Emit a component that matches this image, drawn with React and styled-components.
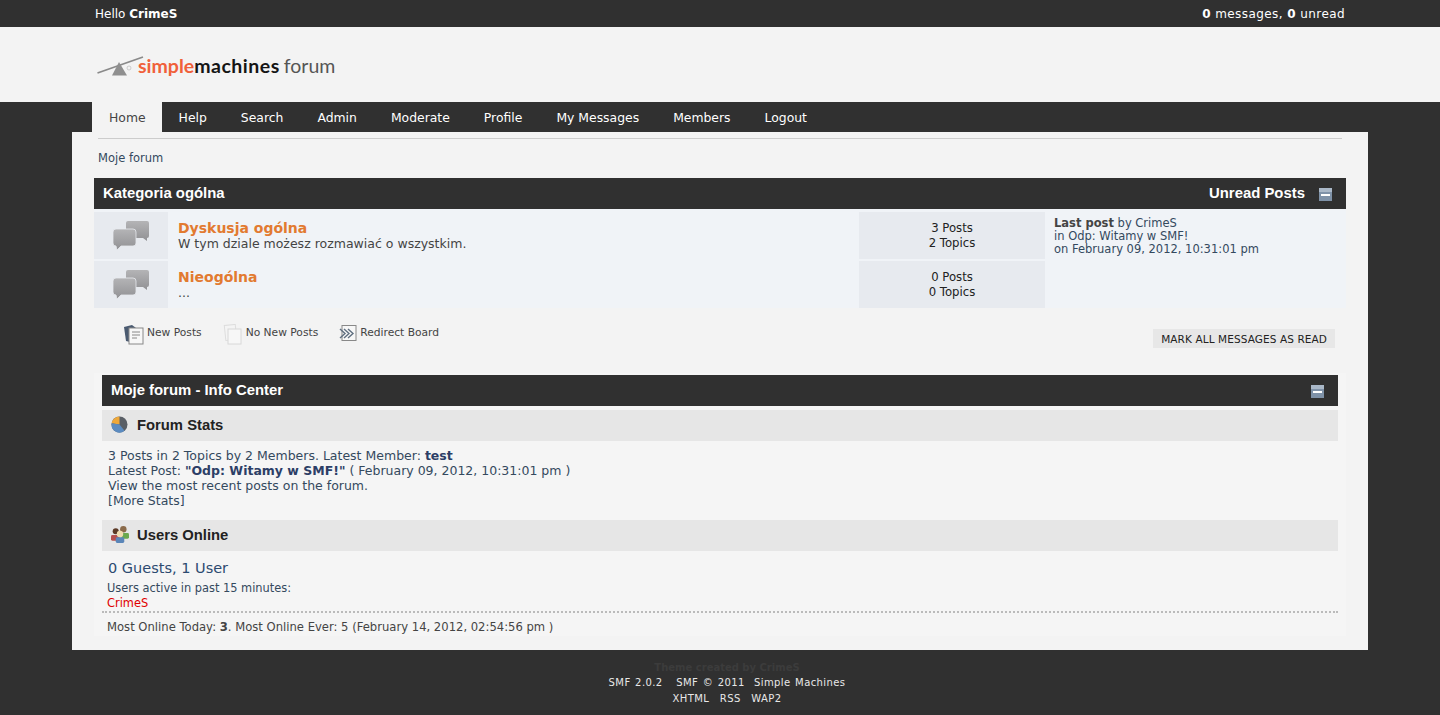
import React from "react";
import styled, { createGlobalStyle } from "styled-components";

const GlobalStyle = createGlobalStyle`
  html, body {
    margin: 0;
    padding: 0;
    background: #303030;
  }
  body {
    font-family: "DejaVu Sans", Verdana, sans-serif;
    font-size: 11.5px;
    color: #444;
  }
`;

const Page = styled.div`
  width: 1440px;
  height: 715px;
  overflow: hidden;
  background: #303030;
`;

const TopBar = styled.div`
  height: 27px;
  padding: 0 95px;
  display: flex;
  justify-content: space-between;
  align-items: center;
  color: #fff;
  font-size: 12px;
  b { font-weight: bold; }
`;

const TopRight = styled.span`
  letter-spacing: 0.42px;
`;

const Header = styled.div`
  height: 75px;
  background: #f3f3f3;
  padding-left: 97px;
  display: flex;
  align-items: center;
`;

const Logo = styled.div`
  display: flex;
  align-items: center;
  font-family: Lato, sans-serif;
  font-size: 19.5px;
  font-weight: 700;
  margin-top: 2px;
`;

const LogoText = styled.span`
  margin-left: -6px;
`;

const LogoWord = styled.span`
  color: ${(p) => p.$color};
  margin-right: ${(p) => p.$gap || 0}px;
  font-weight: ${(p) => p.$weight || 700};
  letter-spacing: ${(p) => p.$track || 0}px;
`;

const Nav = styled.nav`
  height: 30px;
  padding-left: 92px;
  display: flex;
`;

const NavItem = styled.a`
  padding: 0 ${(p) => (p.$active ? 16 : 17)}px 0 17px;
  height: 30px;
  line-height: 31px;
  font-size: 12.4px;
  color: ${(p) => (p.$active ? "#444" : "#fff")};
  background: ${(p) => (p.$active ? "#f3f3f3" : "transparent")};
`;

const Content = styled.main`
  width: 1296px;
  height: 518px;
  margin-left: 72px;
  background: #f3f3f3;
  padding: 6px 22px 0;
  box-sizing: border-box;
`;

const Crumb = styled.div`
  margin: 0 4px;
  border-top: 1px solid #ccc;
  height: 39px;
  line-height: 39px;
  font-size: 11.5px;
  color: #34495e;
`;

const CatBar = styled.div`
  height: 31px;
  box-sizing: border-box;
  padding: 0 ${(p) => p.$right}px 2px 9px;
  background: #303030;
  color: #fff;
  font-family: "Liberation Sans", Arial, sans-serif;
  font-weight: bold;
  font-size: 14.9px;
  display: flex;
  align-items: center;
  justify-content: space-between;
`;

const BarRight = styled.div`
  display: flex;
  align-items: center;
  gap: 14px;
`;

const CollapseIcon = styled.svg`
  margin-top: 4px;
  flex: none;
`;

const Boards = styled.div`
  display: grid;
  grid-template-columns: 74px 691px 186px 1fr;
  grid-auto-rows: 47px;
  row-gap: 2px;
  background: #f0f3f7;
  padding: 3px 0 0;
  height: 96px;
`;

const IconCell = styled.div`
  background: #e7eaef;
  display: flex;
  align-items: center;
  justify-content: center;
`;

const InfoCell = styled.div`
  padding: 9px 10px 0;
  line-height: 15px;
  font-size: 12.5px;
  color: #444;
`;

const BoardName = styled.div`
  font-size: 14px;
  font-weight: bold;
  color: #e27a30;
  line-height: 15px;
`;

const StatsCell = styled.div`
  background: #e7eaef;
  padding-top: 1px;
  box-sizing: border-box;
  display: flex;
  flex-direction: column;
  align-items: center;
  justify-content: center;
  line-height: 15px;
  font-size: 11.7px;
  color: #222;
`;

const LastCell = styled.div`
  padding: 5px 9px 0;
  line-height: 13px;
  font-size: 11.5px;
  color: #34495e;
  b { color: #444; }
`;

const LegendRow = styled.div`
  display: flex;
  justify-content: space-between;
  padding: 16px 11px 0 30px;
  height: 67px;
  box-sizing: border-box;
`;

const Legend = styled.div`
  display: flex;
  gap: 21px;
  height: 24px;
`;

const LegendItem = styled.div`
  display: flex;
  gap: 3px;
  align-items: flex-start;
  font-size: 10.7px;
  line-height: 17px;
  color: #444;
`;

const MarkButton = styled.a`
  height: 19px;
  margin-top: 5px;
  padding: 0 8px;
  background: #e7e7e7;
  color: #222;
  font-size: 10.5px;
  line-height: 20px;
  letter-spacing: 0.1px;
`;

const InfoCenter = styled.section`
  margin-top: -2px;
  padding: 2px 8px 0;
  height: 263px;
  box-sizing: border-box;
  background: #f5f5f5;
`;

const SubHeader = styled.div`
  height: 31px;
  box-sizing: border-box;
  padding: 0 0 2px 9px;
  margin-top: 4px;
  background: #e6e6e6;
  display: flex;
  align-items: center;
  gap: 8px;
  font-family: "Liberation Sans", Arial, sans-serif;
  font-size: 14.8px;
  font-weight: bold;
  color: #222;
`;

const SubIcon = styled.span`
  width: 18px;
  display: flex;
`;

const StatsText = styled.div`
  padding: 7px 6px 0;
  height: 68px;
  font-size: 12.5px;
  line-height: 15px;
  color: #34495e;
  b { color: #2c3e66; }
`;

const OnlineBlock = styled.div`
  padding: 9px 5px 0;
  height: 60px;
  box-sizing: border-box;
`;

const GuestCount = styled.div`
  font-size: 14.5px;
  line-height: 17px;
  padding-left: 1px;
  margin-bottom: 4px;
  color: #2c4a70;
`;

const Small = styled.div`
  font-size: 11.4px;
  line-height: 15px;
  color: ${(p) => p.$color || "#34495e"};
`;

const MostOnline = styled.div`
  border-top: 2px dotted #bbb;
  padding: 7px 5px 0;
  font-size: 11.6px;
  line-height: 15px;
  color: #444;
`;

const Footer = styled.footer`
  text-align: center;
  font-size: 10px;
  padding: 10px 0 0 14px;
`;

const FooterLine = styled.div`
  height: ${(p) => (p.$credit ? 15 : 16)}px;
  line-height: 16px;
  letter-spacing: ${(p) => (p.$credit ? 0 : 0.4)}px;
  word-spacing: ${(p) => p.$spaced || 0}px;
  font-weight: ${(p) => (p.$credit ? "bold" : "normal")};
  color: ${(p) => (p.$credit ? "#3c3c3c" : "#e8e8e8")};
`;

const Seesaw = () => (
  <svg width="47" height="20" viewBox="0 0 47 20">
    <path d="M0.5 17 L46 1" stroke="#8a8a8a" strokeWidth="1.7" fill="none" />
    <path d="M22 6 L30 19.5 L15 19.5 Z" fill="#8f8f8f" />
    <circle cx="32" cy="12" r="2" fill="none" stroke="#bbb" strokeWidth="0.7" />
  </svg>
);

const Bubbles = () => (
  <svg width="36" height="29" viewBox="0 0 36 29">
    <defs>
      <linearGradient id="bub" x1="0" y1="0" x2="0" y2="1">
        <stop offset="0" stopColor="#b4b4b6" />
        <stop offset="1" stopColor="#919194" />
      </linearGradient>
    </defs>
    <path d="M15 0 h19 a2 2 0 0 1 2 2 v13 a2 2 0 0 1 -2 2 v3 l-4 -3 h-15 a2 2 0 0 1 -2 -2 v-13 a2 2 0 0 1 2 -2z" fill="url(#bub)" />
    <path d="M3 8 h17 a3 3 0 0 1 3 3 v11 a3 3 0 0 1 -3 3 h-12 l-4 4 l-1 -4 h-0 a3 3 0 0 1 -3 -3 v-11 a3 3 0 0 1 3 -3z" fill="url(#bub)" stroke="#e7eaef" strokeWidth="0.8" />
  </svg>
);

const Collapse = () => (
  <CollapseIcon width="13" height="13" viewBox="0 0 13 13">
    <rect width="13" height="13" fill="#7f92a8" />
    <rect width="13" height="4" fill="#aab8c8" />
    <rect x="2" y="6" width="9" height="2" fill="#fff" />
  </CollapseIcon>
);

const Pie = () => (
  <svg width="17" height="17" viewBox="0 0 17 17">
    <circle cx="8.5" cy="8.5" r="8" fill="#5a5f66" />
    <path d="M8.5 8.5 L8.5 .5 A8 8 0 0 0 .6 7.3 Z" fill="#eea83a" />
    <path d="M8.5 8.5 L.6 7.3 A8 8 0 0 0 13.5 14.8 Z" fill="#5b8bc0" />
  </svg>
);

const Users = () => (
  <svg width="19" height="19" viewBox="0 0 19 19">
    <circle cx="5" cy="6" r="3.2" fill="#5c3a26" />
    <rect x="0" y="10" width="9" height="6" rx="1.5" fill="#b5504f" />
    <circle cx="13" cy="4" r="3.4" fill="#8a6a4a" />
    <rect x="11" y="8" width="8" height="6" rx="1.5" fill="#6aa84f" />
    <circle cx="9.5" cy="9" r="3.4" fill="#f0dcb0" />
    <rect x="5" y="12.5" width="9" height="6" rx="1.5" fill="#5b86b8" />
  </svg>
);

const LegendNew = () => (
  <svg width="20" height="21" viewBox="0 0 20 21">
    <path d="M0 3 L8 1 L12 4 L6 18 L2 17 Z" fill="#4a5a70" />
    <rect x="5" y="4" width="14" height="16" fill="#f7f7f7" stroke="#888" />
    <path d="M8 8 h8 M8 11 h8 M8 14 h5" stroke="#888" strokeWidth="1" />
  </svg>
);

const LegendNone = () => (
  <svg width="20" height="21" viewBox="0 0 20 21">
    <rect x="2" y="1" width="11" height="15" fill="#f4f4f4" stroke="#ddd" transform="rotate(-6 7 8)" />
    <rect x="5" y="5" width="13" height="15" fill="#f7f7f7" stroke="#d8d8d8" />
  </svg>
);

const LegendRedirect = () => (
  <svg width="18" height="18" viewBox="0 0 18 18">
    <rect x="3" y="1.5" width="14" height="15" fill="#f7f7f7" stroke="#888" />
    <path d="M1 5 L6 9.5 L1 14 M5 5 L10 9.5 L5 14 M9 5 L14 9.5 L9 14" fill="none" stroke="#5f6f80" strokeWidth="1.4" />
  </svg>
);

const menu = ["Home", "Help", "Search", "Admin", "Moderate", "Profile", "My Messages", "Members", "Logout"];

export default function App() {
  return (
    <Page>
      <GlobalStyle />
      <TopBar>
        <span>Hello <b>CrimeS</b></span>
        <TopRight><b>0</b> messages, <b>0</b> unread</TopRight>
      </TopBar>
      <Header>
        <Logo>
          <Seesaw />
          <LogoText>
            <LogoWord $color="#f0603a">simple</LogoWord>
            <LogoWord $color="#151515" $gap={4} $track={0.5}>machines</LogoWord>
            <LogoWord $color="#555" $weight={400}>forum</LogoWord>
          </LogoText>
        </Logo>
      </Header>
      <Nav>
        {menu.map((item, i) => (
          <NavItem key={item} $active={i === 0}>{item}</NavItem>
        ))}
      </Nav>
      <Content>
        <Crumb>Moje forum</Crumb>
        <CatBar $right={14}>
          <span>Kategoria ogólna</span>
          <BarRight>
            <span>Unread Posts</span>
            <Collapse />
          </BarRight>
        </CatBar>
        <Boards>
          <IconCell><Bubbles /></IconCell>
          <InfoCell>
            <BoardName>Dyskusja ogólna</BoardName>
            W tym dziale możesz rozmawiać o wszystkim.
          </InfoCell>
          <StatsCell><span>3 Posts</span><span>2 Topics</span></StatsCell>
          <LastCell>
            <b>Last post</b> by CrimeS<br />
            in Odp: Witamy w SMF!<br />
            on February 09, 2012, 10:31:01 pm
          </LastCell>
          <IconCell><Bubbles /></IconCell>
          <InfoCell>
            <BoardName>Nieogólna</BoardName>
            ...
          </InfoCell>
          <StatsCell><span>0 Posts</span><span>0 Topics</span></StatsCell>
          <LastCell />
        </Boards>
        <LegendRow>
          <Legend>
            <LegendItem><LegendNew />New Posts</LegendItem>
            <LegendItem><LegendNone />No New Posts</LegendItem>
            <LegendItem><LegendRedirect />Redirect Board</LegendItem>
          </Legend>
          <MarkButton>MARK ALL MESSAGES AS READ</MarkButton>
        </LegendRow>
        <InfoCenter>
          <CatBar $right={14}>
            <span>Moje forum - Info Center</span>
            <Collapse />
          </CatBar>
          <SubHeader><SubIcon><Pie /></SubIcon>Forum Stats</SubHeader>
          <StatsText>
            3 Posts in 2 Topics by 2 Members. Latest Member: <b>test</b><br />
            Latest Post: <b>"Odp: Witamy w SMF!"</b> ( February 09, 2012, 10:31:01 pm )<br />
            View the most recent posts on the forum.<br />
            [More Stats]
          </StatsText>
          <SubHeader><SubIcon><Users /></SubIcon>Users Online</SubHeader>
          <OnlineBlock>
            <GuestCount>0 Guests, 1 User</GuestCount>
            <Small>Users active in past 15 minutes:</Small>
            <Small $color="#e00000">CrimeS</Small>
          </OnlineBlock>
          <MostOnline>
            Most Online Today: <b>3</b>. Most Online Ever: 5 (February 14, 2012, 02:54:56 pm )
          </MostOnline>
        </InfoCenter>
      </Content>
      <Footer>
        <FooterLine $credit>Theme created by CrimeS</FooterLine>
        <FooterLine $spaced={1}>SMF 2.0.2 &nbsp; SMF © 2011 &nbsp;Simple Machines</FooterLine>
        <FooterLine $spaced={7}>XHTML RSS WAP2</FooterLine>
      </Footer>
    </Page>
  );
}
